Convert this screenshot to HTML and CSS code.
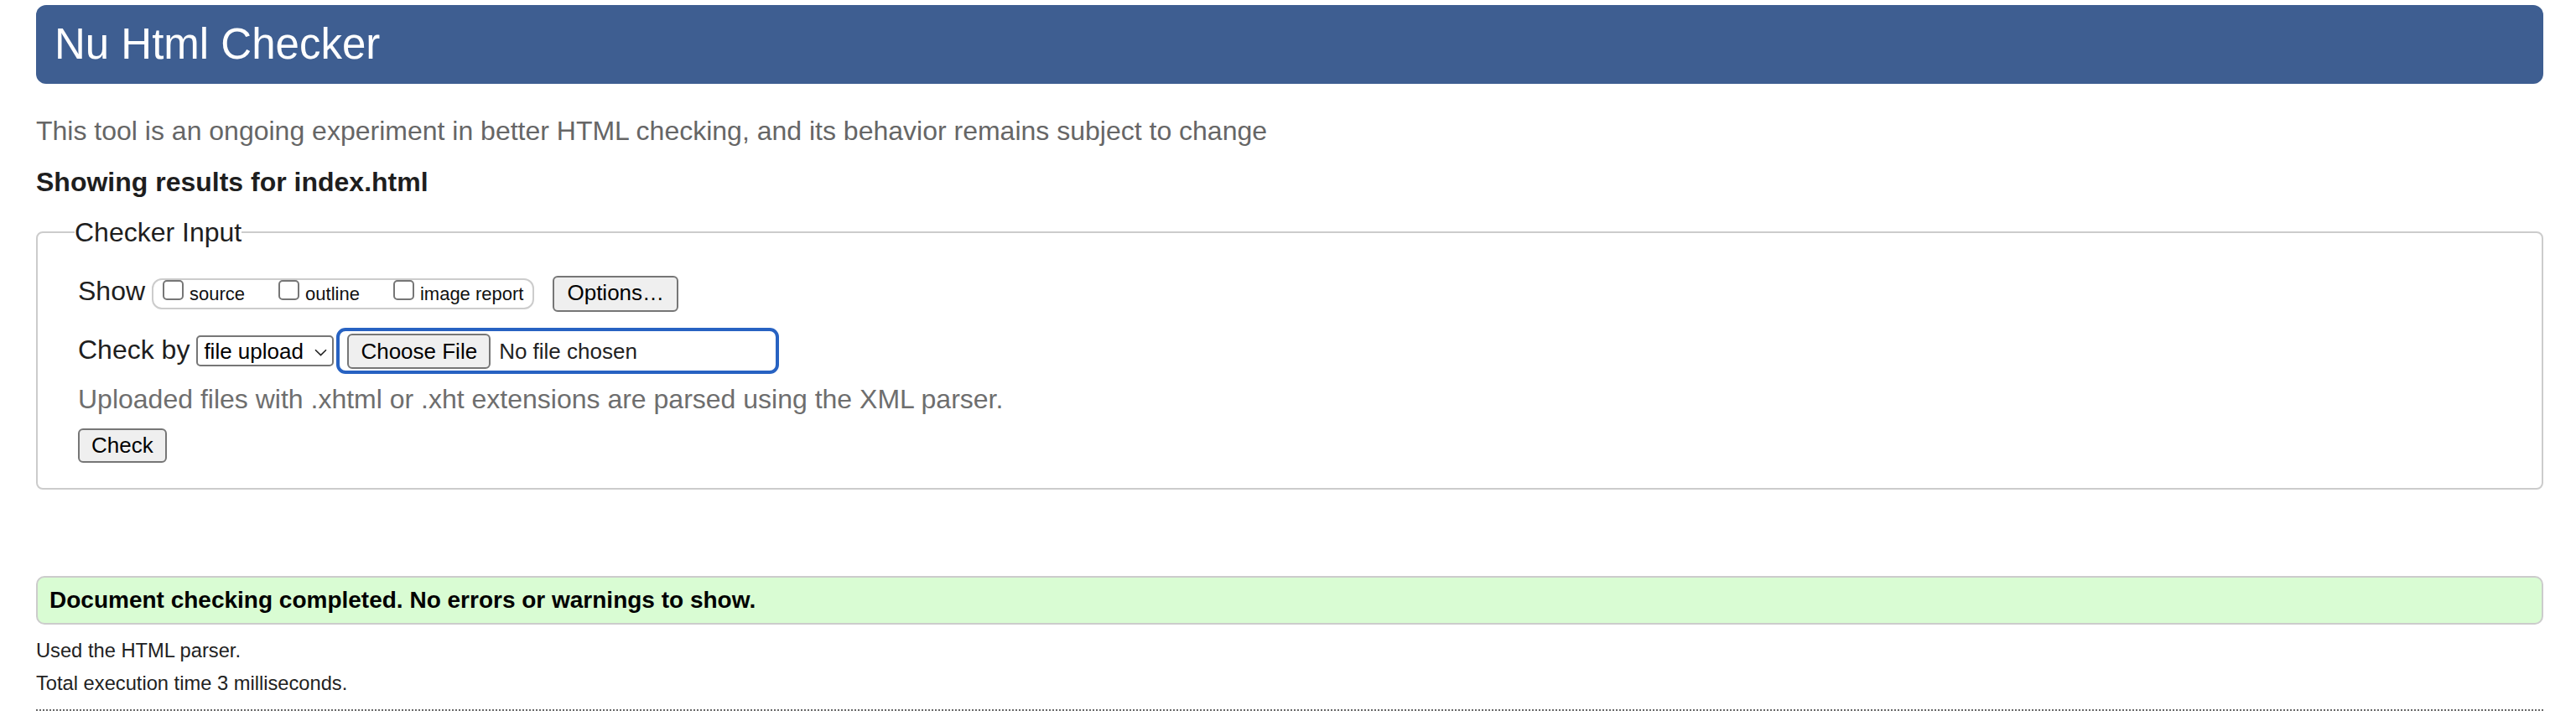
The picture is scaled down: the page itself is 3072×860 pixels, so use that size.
FILE: index.html
```html
<!DOCTYPE html>
<html lang="en">
<head>
<meta charset="utf-8">
<title>Nu Html Checker</title>
<link rel="stylesheet" href="styles.css">
</head>
<body>
<h1 class="title">Nu Html Checker</h1>
<p class="lede">This tool is an ongoing experiment in better HTML checking, and its behavior remains subject to change</p>
<h2 class="showing">Showing results for index.html</h2>
<form class="checker">
  <fieldset class="input">
    <legend class="legend">Checker Input</legend>
    <div class="row">
      <span class="label">Show</span>
      <span class="group">
        <label class="opt"><span class="box"></span><span class="opt-text">source</span></label>
        <label class="opt"><span class="box"></span><span class="opt-text">outline</span></label>
        <label class="opt opt-last"><span class="box"></span><span class="opt-text">image report</span></label>
      </span>
      <button class="btn btn-options" type="button">Options…</button>
    </div>
    <div class="row row-by">
      <span class="label">Check by</span>
      <span class="select">file upload<svg class="chev" width="15" height="9" viewBox="0 0 15 9"><path d="M1 1.2 L7.5 7.6 L14 1.2" fill="none" stroke="#222" stroke-width="1.6"/></svg></span>
      <span class="file"><span class="btn btn-file">Choose File</span><span class="file-name">No file chosen</span></span>
    </div>
    <p class="note">Uploaded files with .xhtml or .xht extensions are parsed using the XML parser.</p>
    <div class="row row-submit">
      <button class="btn btn-check" type="button">Check</button>
    </div>
  </fieldset>
</form>
<p class="status">Document checking completed. No errors or warnings to show.</p>
<p class="meta meta-first">Used the HTML parser.</p>
<p class="meta">Total execution time 3 milliseconds.</p>
<hr class="rule">
</body>
</html>
```

FILE: styles.css
```css
html, body {
  margin: 0;
  background: #fff;
}
body {
  padding: 6px 39px 0 43px;
  font-family: "Liberation Sans", Arial, Helvetica, sans-serif;
  font-size: 32px;
  color: #222;
}
.title {
  margin: 0;
  height: 94px;
  padding: 0 0 0 22px;
  background: #3e5e91;
  color: #fff;
  border-radius: 12px;
  font-size: 51px;
  font-weight: normal;
  line-height: 94px;
}
.lede {
  margin: 38px 0 0;
  font-size: 32px;
  line-height: 36px;
  color: #666;
}
.showing {
  margin: 25px 0 0;
  font-size: 32px;
  line-height: 36px;
  font-weight: bold;
  color: #1e1e1e;
}
.checker {
  margin: 24px 0 0;
}
.input {
  margin: 0;
  padding: 34px 48px 30px;
  border: 2px solid #cccccc;
  border-radius: 8px;
}
.legend {
  margin-left: -4px;
  padding: 0;
  font-size: 32px;
  line-height: 36px;
  color: #1e1e1e;
}
.row {
  display: flex;
  align-items: baseline;
}
.row-by {
  margin-top: 19px;
}
.label {
  margin-right: 8px;
  line-height: 36px;
  color: #1e1e1e;
}
.group {
  display: inline-flex;
  align-items: baseline;
  box-sizing: border-box;
  height: 37px;
  padding: 0 11px 0 11px;
  border: 2px solid #cccccc;
  border-radius: 12px;
}
.opt {
  display: inline-flex;
  align-items: baseline;
  margin-right: 40px;
}
.opt-last {
  margin-right: 0;
}
.box {
  display: inline-block;
  box-sizing: border-box;
  width: 25px;
  height: 24px;
  border: 2px solid #767676;
  border-radius: 5px;
  background: #fff;
}
.opt-text {
  margin-left: 7px;
  font-size: 22px;
  line-height: 24px;
  color: #111;
}
.btn {
  display: inline-block;
  box-sizing: border-box;
  margin: 0;
  border: 2px solid #767676;
  border-radius: 6px;
  background: #efefef;
  font-family: "Liberation Sans", Arial, Helvetica, sans-serif;
  font-size: 26px;
  color: #000;
}
.btn-options {
  margin-left: 22px;
  height: 43px;
  padding: 0 15px 3px;
  line-height: 36px;
}
.select {
  display: inline-flex;
  align-items: center;
  box-sizing: border-box;
  width: 164px;
  height: 37px;
  padding: 1px 0 0 7px;
  border: 2px solid #767676;
  border-radius: 5px;
  font-size: 26px;
  line-height: 32px;
  color: #000;
}
.chev {
  margin-left: 13px;
  margin-top: 2px;
}
.file {
  display: inline-flex;
  align-items: baseline;
  box-sizing: border-box;
  width: 528px;
  margin-left: 3px;
  padding: 3px 0 2px 9px;
  border: 4px solid #2762c2;
  border-radius: 11px;
}
.btn-file {
  height: 42px;
  padding: 1px 14px 1px;
  line-height: 36px;
}
.file-name {
  margin-left: 10px;
  font-size: 26px;
  line-height: 36px;
  color: #222;
}
.note {
  margin: 12px 0 0;
  font-size: 32px;
  line-height: 36px;
  color: #6e6e6e;
}
.row-submit {
  margin-top: 17px;
}
.btn-check {
  height: 41px;
  padding: 0 14px 1px;
  line-height: 36px;
}
.status {
  margin: 103px 0 0;
  padding: 9px 14px;
  border: 2px solid #cccccc;
  border-radius: 10px;
  background: #d9fcd3;
  font-size: 28px;
  line-height: 36px;
  font-weight: bold;
  color: #000;
}
.meta {
  margin: 11px 0 0;
  font-size: 23.7px;
  line-height: 28px;
  color: #222;
}
.meta-first {
  margin-top: 17px;
}
.rule {
  margin: 17px 0 0;
  height: 0;
  border: 0;
  border-top: 2px dotted #666;
}
```
